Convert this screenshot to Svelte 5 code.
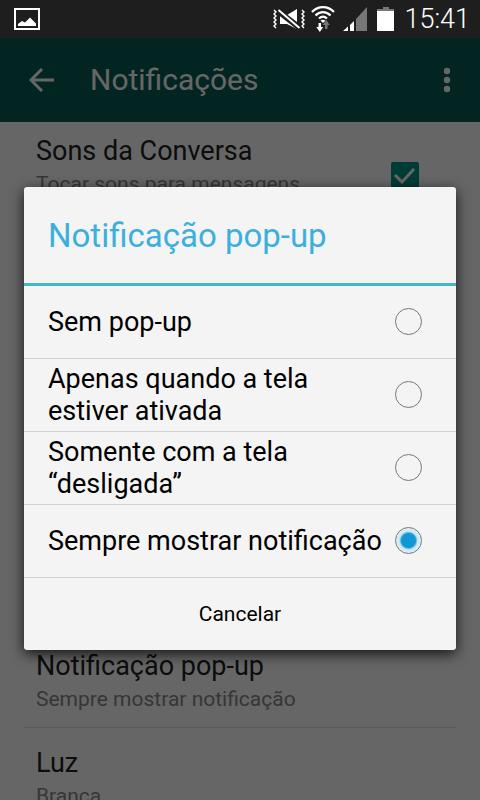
<script lang="ts">
	const options = [
		'Sem pop-up',
		'Apenas quando a tela estiver ativada',
		'Somente com a tela “desligada”',
		'Sempre mostrar notificação'
	];

	let selected = options[3];
	let sounds = true;
</script>

<div class="screen">
	<div class="status-bar">
		<svg class="photo" width="26" height="22" viewBox="0 0 26 22" aria-hidden="true">
			<rect x="1" y="1" width="24" height="20" fill="none" stroke="#fff" stroke-width="2" />
			<path d="M4 18v-2l4-3 3 1.500 5-5 3 3 3 3v2.500z" fill="#fff" />
		</svg>

		<div class="indicators">
			<svg width="32" height="22" viewBox="0 0 32 22" aria-hidden="true">
				<path
					d="M1 2l2 2-2 2 2 2-2 2 2 2-2 2 2 2-2 2 2 2M29 2l2 2-2 2 2 2-2 2 2 2-2 2 2 2-2 2 2 2"
					fill="none"
					stroke="#fff"
					stroke-width="1.400"
				/>
				<path d="M7 7v9h7l10 5V1l-10 6z" fill="#fff" />
				<path d="M5 3l22 17" stroke="#1e1e1e" stroke-width="6" />
				<path d="M5.500 2l21 18" stroke="#fff" stroke-width="2" />
			</svg>
			<svg class="wifi" width="24" height="26" viewBox="0 0 24 26" aria-hidden="true">
				<g fill="none" stroke="#fff" stroke-width="2.200">
					<path d="M1 6C7-.5 17-.5 23 6" />
					<path d="M4.500 9.500c4.500-4.500 10.500-4.500 15 0" />
					<path d="M8 12.500c2.500-2.300 5.500-2.300 8 0" />
				</g>
				<path d="M9.500 14.500q2.500-1.500 5 0L12 17z" fill="#fff" />
				<path d="M7.500 17h2.500v4h2.200l-3.400 5-3.500-5h2.200z" fill="#fff" />
				<path d="M14 23h2.500v-4h2.200l-3.400-5-3.500 5H14z" fill="#777" />
			</svg>
			<svg class="signal" width="24" height="24" viewBox="0 0 24 24" aria-hidden="true">
				<path d="M0 24l5-4.500V24zM7 24v-6l4-4v10z" fill="#fff" />
				<path d="M13 24V12L24 0v24z" fill="#777" />
			</svg>
			<svg class="battery" width="17" height="24" viewBox="0 0 17 24" aria-hidden="true">
				<path d="M0 4h17v20H0z" fill="#fff" />
				<path d="M6 0h6v2h5v2H0V2h6z" fill="#777" />
			</svg>
			<time>15:41</time>
		</div>
	</div>

	<div class="content">
		<header class="app-bar">
			<button class="icon-button" aria-label="Voltar">
				<svg width="26" height="24" viewBox="0 0 26 24" aria-hidden="true">
					<path d="M13 1L2 12l11 11M2 12h23" fill="none" stroke="#fff" stroke-width="3" />
				</svg>
			</button>
			<h1>Notificações</h1>
			<button class="icon-button" aria-label="Mais opções">
				<svg width="8" height="26" viewBox="0 0 8 26" aria-hidden="true">
					<circle cx="4" cy="4" r="3.200" fill="#fff" />
					<circle cx="4" cy="13" r="3.200" fill="#fff" />
					<circle cx="4" cy="22" r="3.200" fill="#fff" />
				</svg>
			</button>
		</header>

		<main>
			<label class="setting sounds">
				<span class="text">
					<span class="name">Sons da Conversa</span>
					<span class="summary">Tocar sons para mensagens</span>
				</span>
				<span class="check">
					<input type="checkbox" bind:checked={sounds} />
					<svg width="28" height="28" viewBox="0 0 28 28" aria-hidden="true">
						<path d="M4 13l7 7L23 7" fill="none" stroke="#fff" stroke-width="3" />
					</svg>
				</span>
			</label>
			<div class="setting">
				<span class="text">
					<span class="name">Notificação pop-up</span>
					<span class="summary">Sempre mostrar notificação</span>
				</span>
			</div>
			<div class="setting">
				<span class="text">
					<span class="name">Luz</span>
					<span class="summary">Branca</span>
				</span>
			</div>
		</main>

		<div class="scrim">
			<div class="dialog" role="dialog" aria-modal="true" aria-labelledby="dialog-title">
				<h2 id="dialog-title">Notificação pop-up</h2>
				{#each options as option}
					<label class="option">
						<span>{option}</span>
						<input type="radio" name="popup" value={option} bind:group={selected} />
					</label>
				{/each}
				<button class="cancel">Cancelar</button>
			</div>
		</div>
	</div>
</div>

<style>
	:global(body) {
		margin: 0;
	}

	.screen {
		display: flex;
		flex-direction: column;
		height: 100vh;
		overflow: hidden;
		font-family: Roboto, sans-serif;
		background: #fff;
	}

	h1,
	h2 {
		margin: 0;
		font-weight: 400;
	}

	button {
		padding: 0;
		border: 0;
		background: none;
		font-family: inherit;
	}

	svg {
		display: block;
		flex-shrink: 0;
	}

	.status-bar {
		display: flex;
		align-items: center;
		justify-content: space-between;
		height: 38px;
		padding: 0 10px 0 14px;
		flex-shrink: 0;
		background: #1e1e1e;
		color: #fff;
	}

	.indicators {
		display: flex;
		align-items: center;
	}

	.wifi {
		margin-left: 6px;
	}

	.signal {
		margin-left: 8px;
	}

	.battery {
		margin: 0 10px;
	}

	time {
		font-size: 27px;
		font-weight: 300;
		line-height: 38px;
	}

	.content {
		position: relative;
		display: flex;
		flex-direction: column;
		flex: 1;
		min-height: 0;
		overflow: hidden;
	}

	.app-bar {
		display: flex;
		align-items: center;
		height: 84px;
		padding: 0 29px;
		flex-shrink: 0;
		background: #075e54;
		color: #fff;
	}

	h1 {
		flex: 1;
		margin-left: 35px;
		font-size: 30px;
		line-height: 40px;
	}

	main {
		padding: 0 24px;
	}

	.setting {
		display: flex;
		padding: 19px 12px 14px;
		border-bottom: 1px solid #e0e0e0;
	}

	/* tall row, the dialog covers most of it */
	.sounds {
		min-height: 482px;
		padding-top: 13px;
		border-bottom: 0;
	}

	.text {
		display: flex;
		flex-direction: column;
		flex: 1;
		gap: 3px;
	}

	.name {
		font-size: 27px;
		line-height: 32px;
		color: #222;
	}

	.summary {
		font-size: 21px;
		line-height: 28px;
		color: #888;
	}

	.check {
		display: grid;
		align-self: start;
		margin: 27px 25px 0 0;
	}

	.check input,
	.check svg {
		grid-area: 1 / 1;
	}

	.check svg {
		pointer-events: none;
	}

	.check input {
		width: 28px;
		height: 28px;
		margin: 0;
		appearance: none;
		border-radius: 2px;
		background: #009688;
	}

	.scrim {
		position: absolute;
		inset: 0;
		display: flex;
		align-items: center;
		padding: 0 24px 2px;
		background: rgba(0, 0, 0, 0.6);
	}

	.dialog {
		flex: 1;
		border-radius: 3px;
		background: #f4f4f4;
		box-shadow: 0 4px 14px rgba(0, 0, 0, 0.8);
		color: #000;
	}

	h2 {
		padding: 29px 24px 27px;
		border-bottom: 3px solid #45b4ce;
		font-size: 33px;
		line-height: 40px;
		color: #3cb0dc;
	}

	.option {
		display: flex;
		align-items: center;
		gap: 9px;
		min-height: 72px;
		padding: 0 34px 0 24px;
		border-bottom: 1px solid #d2d2d2;
		font-size: 27px;
		line-height: 32px;
	}

	.option span {
		flex: 1;
	}

	.option input {
		width: 27px;
		height: 27px;
		margin: 0;
		flex-shrink: 0;
		appearance: none;
		border: 1px solid #777;
		border-radius: 50%;
	}

	.option input:checked {
		background: radial-gradient(circle, #1197d4 0 7px, #c4e5f2 9px, #e2f0f5 12px);
	}

	.cancel {
		width: 100%;
		height: 72px;
		font-size: 21px;
		color: #000;
	}
</style>
